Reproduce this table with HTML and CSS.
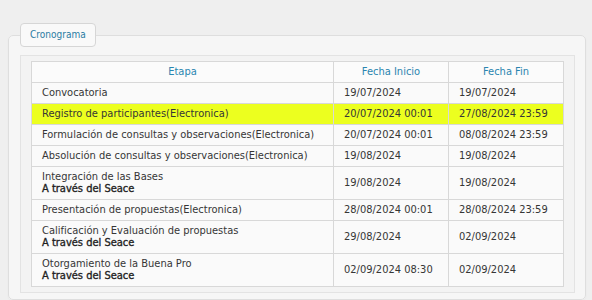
FILE: index.html
```html
<!DOCTYPE html>
<html lang="es">
<head>
    <meta charset="UTF-8">
    <meta name="viewport" content="width=device-width, initial-scale=1.0">
    <title>Cronograma</title>
    <link rel="stylesheet" href="styles.css">
</head>
<body>

    <fieldset class="panel">
        <legend class="panel-tab">Cronograma</legend>

        <div class="panel-body">
            <table class="crono">
                <thead>
                    <tr>
                        <th class="col-etapa">Etapa</th>
                        <th class="col-fecha">Fecha Inicio</th>
                        <th class="col-fecha">Fecha Fin</th>
                    </tr>
                </thead>
                <tbody>
                    <tr>
                        <td>Convocatoria</td>
                        <td>19/07/2024</td>
                        <td>19/07/2024</td>
                    </tr>
                    <tr class="actual">
                        <td>Registro de participantes(Electronica)</td>
                        <td>20/07/2024 00:01</td>
                        <td>27/08/2024 23:59</td>
                    </tr>
                    <tr>
                        <td>Formulación de consultas y observaciones(Electronica)</td>
                        <td>20/07/2024 00:01</td>
                        <td>08/08/2024 23:59</td>
                    </tr>
                    <tr>
                        <td>Absolución de consultas y observaciones(Electronica)</td>
                        <td>19/08/2024</td>
                        <td>19/08/2024</td>
                    </tr>
                    <tr>
                        <td>Integración de las Bases<br><b>A través del Seace</b></td>
                        <td>19/08/2024</td>
                        <td>19/08/2024</td>
                    </tr>
                    <tr>
                        <td>Presentación de propuestas(Electronica)</td>
                        <td>28/08/2024 00:01</td>
                        <td>28/08/2024 23:59</td>
                    </tr>
                    <tr>
                        <td>Calificación y Evaluación de propuestas<br><b>A través del Seace</b></td>
                        <td>29/08/2024</td>
                        <td>02/09/2024</td>
                    </tr>
                    <tr>
                        <td>Otorgamiento de la Buena Pro<br><b>A través del Seace</b></td>
                        <td>02/09/2024 08:30</td>
                        <td>02/09/2024</td>
                    </tr>
                </tbody>
            </table>
        </div>
    </fieldset>

</body>
</html>
```

FILE: styles.css
```css
body {
    margin: 0;
    padding: 23px 6px 0 8px;
    background: #efefef;
    font-family: 'DejaVu Sans Condensed', 'DejaVu Sans', sans-serif;
    font-size: 11px;
    color: #363636;
}
.panel {
    margin: 0;
    padding: 8px 10px 6px 11px;
    border: 1px solid #dedede;
    border-radius: 5px;
    background: #f6f6f6;
    box-shadow: 0 1px 2px rgba(0, 0, 0, 0.04);
}
.panel-tab {
    padding: 4px 9px 5px 9px;
    border: 1px solid #d6d6d6;
    border-radius: 4px;
    background: #f9f9f9;
    color: #2a7ca3;
    font-size: 10px;
    line-height: 13px;
}
/* inner box around the table */
.panel-body {
    padding: 5px 10px 5px 10px;
    border: 1px solid #e3e3e3;
    background: #f3f3f3;
}
.crono {
    width: 100%;
    border-collapse: collapse;
    background: #fafafa;
}
.crono th, .crono td {
    padding: 4px 10px;
    border: 1px solid #d8d8d8;
    line-height: 12px;
    text-align: left;
    vertical-align: middle;
}
.crono th {
    font-weight: normal;
    color: #2a85b0;
    text-align: center;
    background: #fbfbfb;
}
/* second line of the stage, slightly heavier */
.crono td b {
    font-weight: normal;
    color: #1f1f1f;
    -webkit-text-stroke: 0.35px #1f1f1f;
}
.col-fecha {
    width: 94px;
}
.crono tr.actual td {
    background: #ecff1f;
}
```
